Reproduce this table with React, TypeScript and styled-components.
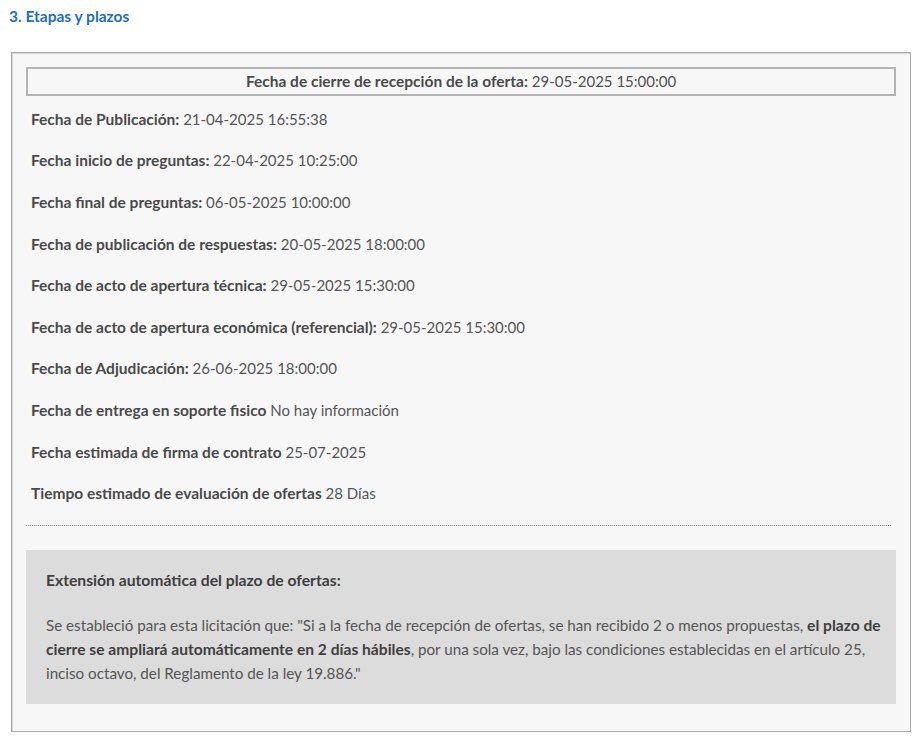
import React from "react";
import styled, { createGlobalStyle } from "styled-components";

const Global = createGlobalStyle`
  html, body { margin: 0; padding: 0; background: #ffffff; }
  body { font-family: Lato, "Noto Sans", sans-serif; color: #4a4a4a; }
`;

const Page = styled.div`
  width: 921px;
  height: 742px;
  padding: 6px 10px 0 9px;
  box-sizing: border-box;
`;

const Title = styled.h3`
  margin: 0;
  font-size: 15.5px;
  line-height: 20px;
  font-weight: 700;
  color: #1c6fc0;
`;

const Box = styled.section`
  margin: 26px 0 0 2px;
  width: 900px;
  height: 680px;
  box-sizing: border-box;
  border: 1px solid #a9a9a9;
  box-shadow: inset 1px 1px 0 #d6d6d6;
  background: #f7f7f7;
  padding: 14px 14px 0 14px;
  display: flex;
  flex-direction: column;
`;

const Header = styled.div`
  height: 29px;
  box-sizing: border-box;
  border: 2px solid #b3b3b3;
  text-align: center;
  line-height: 25px;
  font-size: 15px;
  color: #505050;
  white-space: pre;
`;

const List = styled.div`
  margin-top: 2px;
  display: flex;
  flex-direction: column;
  padding-left: 5px;
`;

const Row = styled.div`
  height: 41.6px;
  display: flex;
  align-items: center;
  font-size: 15px;
  color: #555555;
  white-space: pre;
`;

const Label = styled.b`
  font-weight: 700;
  font-size: 15.5px;
  color: #4a4a4a;
`;

const Divider = styled.hr`
  margin: 11px 5px 0 0;
  border: 0;
  border-top: 1px dotted #8c8c8c;
  height: 0;
`;

const Notice = styled.div`
  margin-top: 24px;
  height: 154px;
  box-sizing: border-box;
  background: #dcdcdc;
  padding: 20px 10px 0 20px;
  font-size: 15.2px;
  color: #555555;
`;

const NoticeTitle = styled.div`
  font-weight: 700;
  font-size: 15.7px;
  color: #3f3f3f;
  line-height: 20px;
`;

const NoticeText = styled.p`
  margin: 23px 0 0 0;
  line-height: 24px;
`;

const Strong = styled.b`
  font-weight: 700;
  font-size: 15.6px;
  line-height: 1;
  color: #3f3f3f;
`;

const rows: [string, string][] = [
  ["Fecha de Publicación:", "21-04-2025 16:55:38"],
  ["Fecha inicio de preguntas:", "22-04-2025 10:25:00"],
  ["Fecha final de preguntas:", "06-05-2025 10:00:00"],
  ["Fecha de publicación de respuestas:", "20-05-2025 18:00:00"],
  ["Fecha de acto de apertura técnica:", "29-05-2025 15:30:00"],
  ["Fecha de acto de apertura económica (referencial):", "29-05-2025 15:30:00"],
  ["Fecha de Adjudicación:", "26-06-2025 18:00:00"],
  ["Fecha de entrega en soporte fisico", "No hay información"],
  ["Fecha estimada de firma de contrato", "25-07-2025"],
  ["Tiempo estimado de evaluación de ofertas", "28 Días"],
];

export default function App() {
  return (
    <>
      <Global />
      <Page>
        <Title>3. Etapas y plazos</Title>
        <Box>
          <Header>
            <Label>Fecha de cierre de recepción de la oferta:</Label>
            {" 29-05-2025 15:00:00"}
          </Header>
          <List>
            {rows.map(([l, v]) => (
              <Row key={l}>
                <Label>{l}</Label>
                {" " + v}
              </Row>
            ))}
          </List>
          <Divider />
          <Notice>
            <NoticeTitle>Extensión automática del plazo de ofertas:</NoticeTitle>
            <NoticeText>
              Se estableció para esta licitación que: "Si a la fecha de recepción de ofertas, se han recibido 2 o menos propuestas,{" "}
              <Strong>el plazo de cierre se ampliará automáticamente en 2 días hábiles</Strong>, por una sola vez, bajo las condiciones establecidas en el artículo 25, inciso octavo, del Reglamento de la ley 19.886."
            </NoticeText>
          </Notice>
        </Box>
      </Page>
    </>
  );
}
